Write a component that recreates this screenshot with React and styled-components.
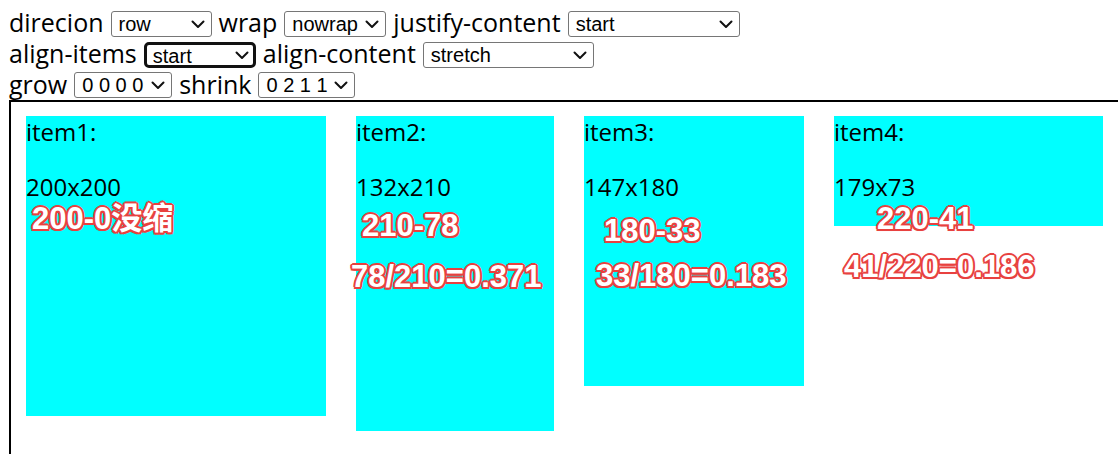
import React from 'react';
import styled, { createGlobalStyle } from 'styled-components';

const GlobalStyle = createGlobalStyle`
  html, body {
    margin: 0;
    background: #fff;
    overflow: hidden;
  }
  body {
    padding: 8px 0 0 9px;
    font-family: "Open Sans", "Noto Sans", sans-serif;
    font-size: 24px;
    color: #000;
  }
`;

const items = [
  { name: 'item1', size: '200x200', w: 300, h: 300, notes: [{ text: '200-0没缩', x: 6, y: 87 }] },
  {
    name: 'item2', size: '132x210', w: 198, h: 315,
    notes: [{ text: '210-78', x: 6, y: 94 }, { text: '78/210=0.371', x: -5, y: 145 }],
  },
  {
    name: 'item3', size: '147x180', w: 220, h: 270,
    notes: [{ text: '180-33', x: 20, y: 99 }, { text: '33/180=0.183', x: 12, y: 144 }],
  },
  {
    name: 'item4', size: '179x73', w: 269, h: 110,
    notes: [{ text: '220-41', x: 43, y: 87 }, { text: '41/220=0.186', x: 10, y: 135 }],
  },
];

function Chevron() {
  return (
    <Arrow width="14" height="9" viewBox="0 0 14 9">
      <path d="M1.5 1.5 L7 7 L12.5 1.5" fill="none" stroke="#111" strokeWidth="2" strokeLinecap="round" strokeLinejoin="round" />
    </Arrow>
  );
}

function Select({ value, width, focused }) {
  return (
    <SelectWrap $w={width}>
      <SelectBox $focused={focused} defaultValue={value}>
        <option>{value}</option>
      </SelectBox>
      <Chevron />
    </SelectWrap>
  );
}

export default function App() {
  return (
    <>
      <GlobalStyle />
      <Controls>
        <Row>
          <Label>direcion</Label>
          <Select value="row" width={101} />
          <Label>wrap</Label>
          <Select value="nowrap" width={102} />
          <Label>justify-content</Label>
          <Select value="start" width={172} />
        </Row>
        <Row>
          <Label>align-items</Label>
          <Select value="start" width={112} focused />
          <Label>align-content</Label>
          <Select value="stretch" width={171} />
        </Row>
        <Row $h={30}>
          <Label>grow</Label>
          <Select value="0 0 0 0" width={98} />
          <Label>shrink</Label>
          <Select value="0 2 1 1" width={97} />
        </Row>
      </Controls>
      <Box>
        {items.map((it) => (
          <Item key={it.name} $w={it.w} $h={it.h}>
            {it.name}:
            <Size>{it.size}</Size>
            {it.notes.map((n) => (
              <Note key={n.text} $x={n.x} $y={n.y}>{n.text}</Note>
            ))}
          </Item>
        ))}
      </Box>
    </>
  );
}

const Controls = styled.div`
  display: flex;
  flex-direction: column;
`;

const Row = styled.div`
  display: flex;
  align-items: center;
  gap: 7px;
  height: ${(p) => p.$h || 31}px;
  white-space: nowrap;
`;

const Label = styled.span`
  font-size: 25px;
  line-height: 1;
  margin-top: -2px;
`;

const SelectWrap = styled.span`
  position: relative;
  display: inline-flex;
  width: ${(p) => p.$w}px;
  height: 26px;
`;

const SelectBox = styled.select`
  appearance: none;
  width: 100%;
  height: 100%;
  box-sizing: border-box;
  margin: 0;
  padding: 0 0 0 ${(p) => (p.$focused ? 6 : 7)}px;
  font-family: "Liberation Sans", Arial, sans-serif;
  font-size: 20px;
  color: #000;
  background: #fff;
  border: ${(p) => (p.$focused ? '3px solid #111' : '1px solid #767676')};
  border-radius: ${(p) => (p.$focused ? 5 : 3)}px;
  outline: none;
`;

const Arrow = styled.svg`
  position: absolute;
  right: 7px;
  top: 9px;
  pointer-events: none;
`;

const Box = styled.div`
  display: flex;
  align-items: flex-start;
  width: 1109px;
  height: 360px;
  box-sizing: border-box;
  border-top: 2px solid #000;
  border-left: 2px solid #000;
`;

const Item = styled.div`
  position: relative;
  flex: none;
  width: ${(p) => p.$w}px;
  height: ${(p) => p.$h}px;
  margin: 14px 15px 15px;
  background: #00ffff;
  line-height: 32px;
`;

const Size = styled.p`
  margin: 23px 0 0;
`;

const Note = styled.span`
  position: absolute;
  left: ${(p) => p.$x}px;
  top: ${(p) => p.$y}px;
  font-family: "Liberation Sans", "Noto Sans CJK SC", Arial, sans-serif;
  font-weight: bold;
  font-size: 31px;
  line-height: 1;
  white-space: nowrap;
  color: #fff;
  text-shadow:
    2px 0 0 #e8413f, -2px 0 0 #e8413f, 0 2px 0 #e8413f, 0 -2px 0 #e8413f,
    1.5px 1.5px 0 #e8413f, -1.5px 1.5px 0 #e8413f, 1.5px -1.5px 0 #e8413f, -1.5px -1.5px 0 #e8413f,
    0 0 3px rgba(232, 65, 63, 0.7);
`;
